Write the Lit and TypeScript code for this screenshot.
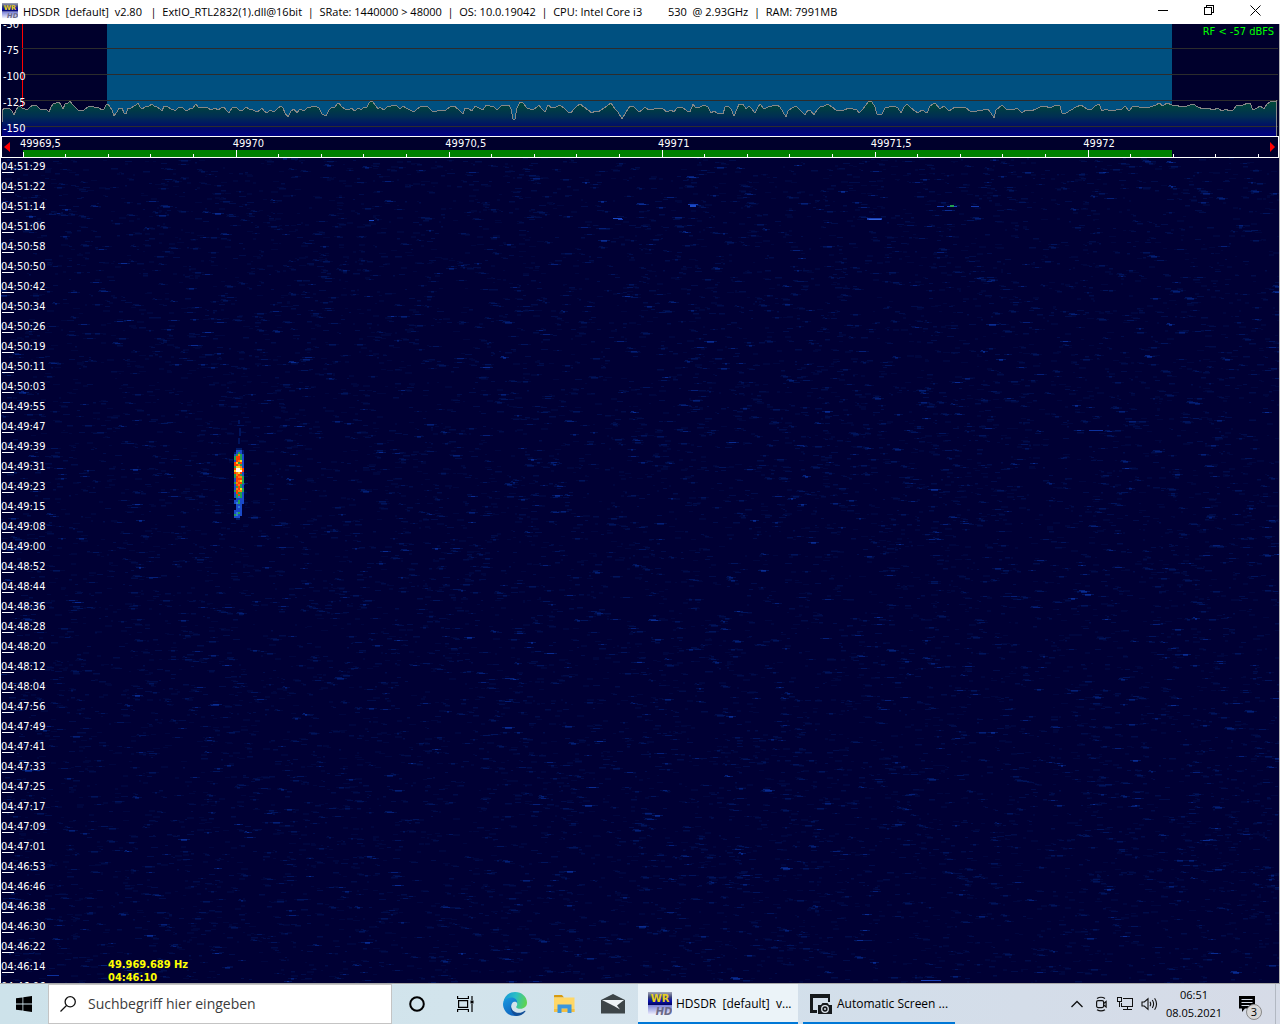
import { LitElement, html, css, svg } from "lit";
import { customElement } from "lit/decorators.js";

/* Spectrum trace: x,y pairs, y measured from the top of the plot. */
const TRACE =
  "1,98 1,86 4,84 8,84 11,87 13,91 15,86 17,83 19,82 21,84 24,85 27,85 29,83 32,81 36,82 38,84 40,86 43,85 46,86 48,88 50,83 52,80 55,79 58,78 60,81 62,85 64,80 67,79 69,77 72,81 74,83 77,86 80,87 83,86 87,83 90,82 93,83 97,83 101,86 103,85 105,81 107,80 109,83 111,86 113,92 116,88 118,84 121,84 123,89 125,90 127,84 130,84 133,82 135,81 137,79 139,83 141,85 144,83 148,82 151,80 153,82 156,83 159,85 161,87 163,82 166,82 170,85 173,86 175,86 178,83 181,83 184,86 187,86 190,84 192,84 195,80 197,83 204,83 207,84 210,86 214,84 217,86 220,84 223,83 225,86 228,89 231,84 235,83 239,87 242,86 245,83 248,85 252,86 256,88 259,86 261,84 263,87 266,89 269,86 273,88 276,85 280,82 282,84 284,89 287,93 290,87 293,85 296,89 299,85 303,87 306,84 310,83 314,82 318,84 321,90 325,92 328,86 331,83 334,83 336,80 338,79 341,83 344,85 347,86 351,84 353,87 358,84 360,86 363,83 366,83 368,79 370,77 372,78 375,82 377,85 379,83 383,86 386,83 390,82 393,81 396,82 399,85 402,82 405,84 409,86 413,88 416,85 419,83 423,82 427,83 431,87 436,87 441,86 445,86 449,83 453,82 457,85 462,90 464,84 468,85 471,87 474,82 478,84 482,86 485,81 489,82 493,83 496,86 500,82 503,81 508,81 510,85 512,95 514,95 516,84 519,78 522,79 526,84 529,85 533,85 536,83 538,81 540,84 544,88 547,81 551,84 555,83 559,81 564,85 567,88 570,89 573,85 576,82 579,80 583,83 587,86 591,89 594,87 597,88 600,86 603,84 606,82 610,79 614,85 617,88 621,95 625,88 629,82 633,83 638,88 641,86 644,83 648,86 653,85 659,84 662,85 666,88 670,86 673,88 676,84 681,83 686,87 689,88 692,80 695,84 699,83 703,81 707,83 710,89 713,87 716,89 722,90 724,83 727,82 730,85 733,92 736,85 738,80 742,80 745,85 748,82 751,85 754,89 756,85 759,80 763,85 767,83 771,82 776,81 779,83 782,88 785,93 787,87 791,84 795,82 799,86 804,91 807,86 810,87 813,91 816,86 819,83 823,82 827,80 831,83 835,86 839,87 843,86 848,84 852,85 856,86 858,89 861,86 865,81 868,77 871,78 874,83 876,90 881,90 884,84 888,83 893,82 897,84 900,89 903,83 906,80 910,84 914,87 917,89 921,86 926,89 929,82 934,79 939,85 943,82 948,87 954,83 964,83 970,88 976,87 982,86 987,85 990,89 993,94 995,86 1001,81 1005,85 1012,86 1016,84 1021,89 1025,86 1030,87 1035,85 1039,83 1044,82 1049,84 1055,81 1059,82 1061,89 1065,89 1070,86 1075,83 1080,81 1086,85 1090,86 1094,82 1098,80 1101,87 1105,85 1109,87 1115,86 1121,85 1124,82 1128,87 1132,82 1138,83 1143,84 1149,83 1155,81 1158,79 1162,82 1166,79 1171,81 1175,81 1180,83 1186,82 1192,80 1197,83 1202,85 1207,84 1212,86 1217,84 1221,87 1225,85 1228,87 1232,86 1236,81 1242,81 1247,79 1249,79 1252,86 1256,84 1259,82 1263,85 1266,80 1269,78 1275,77 1275,95 1276,112";

const LEVELS = ["-50", "-75", "-100", "-125", "-150"];
const FREQS = ["49969,5", "49970", "49970,5", "49971", "49971,5", "49972"];

const TIMES = (
  "04:51:29 04:51:22 04:51:14 04:51:06 04:50:58 04:50:50 04:50:42 04:50:34 04:50:26 04:50:19 04:50:11 04:50:03 " +
  "04:49:55 04:49:47 04:49:39 04:49:31 04:49:23 04:49:15 04:49:08 04:49:00 04:48:52 04:48:44 04:48:36 04:48:28 " +
  "04:48:20 04:48:12 04:48:04 04:47:56 04:47:49 04:47:41 04:47:33 04:47:25 04:47:17 04:47:09 04:47:01 04:46:53 " +
  "04:46:46 04:46:38 04:46:30 04:46:22 04:46:14 04:46:06"
).split(" ");

/* Background noise of the waterfall: short dashes grouped by brightness. */
const NOISE_SHADES = ["#00063e", "#000c4a", "#00145c", "#041f78", "#0a2c92"];
function noisePaths(width: number, height: number): string[] {
  let seed = 20210508;
  const rnd = () => {
    seed = (seed * 1664525 + 1013904223) >>> 0;
    return seed / 4294967296;
  };
  const parts: string[][] = NOISE_SHADES.map(() => []);
  const dash = (level: number, x: number, y: number, w: number) => {
    if (level >= 0) parts[level].push(`M${x} ${y}h${w}v1h-${w}z`);
  };
  for (let i = 0; i < 12500; i++) {
    const r = rnd();
    const level = r < 0.46 ? 0 : r < 0.79 ? 1 : r < 0.94 ? 2 : r < 0.988 ? 3 : 4;
    const x = Math.floor(rnd() * (width / 2)) * 2;
    const y = Math.floor(rnd() * height);
    const w = 2 + Math.floor(rnd() * 6);
    dash(level, x, y, w);
    if (rnd() < 0.45) dash(Math.max(0, level - 1), x, y + 1, w);
    if (rnd() < 0.25) dash(level - 1, x - 2, y - 1, w);
    if (level > 1) dash(level - 2, x - 3, y, w + 6);
  }
  return parts.map((p) => p.join(""));
}
const NOISE = noisePaths(1278, 825);

/* Carrier burst: one row per 2px, five 2px cells per row. */
const HEAT: Record<string, string> = {
  d: "#001a66", b: "#1a49c8", c: "#2f7fd0", g: "#22a050", o: "#ff7a10", r: "#ff3d00", y: "#ffd21a", w: "#fffdf0",
};
const BURST = (
  ".ddd. .bbbd dbgbd bgogb grrgb grrgb broyb rygrb rrogb gyyob rwwyr ywwwr royrb gorgb groog brrrg broyg gorrg " +
  "brogb bgrgb boryg groog brggb bgrgb bgcgb .bbbb bbgbb bcgbb .bbb. .bcb. .bbb. bbbb. bcgb. gcbb. bbb.. .dd.."
).split(" ");

/* Stronger single traces: x, y, width, height, colour. */
const SIGNALS: [number, number, number, number, string][] = [
  [946, 48, 10, 1, "#1a49c8"], [949, 47, 4, 2, "#22a050"], [936, 48, 7, 1, "#123ab0"], [970, 48, 8, 1, "#123ab0"],
  [687, 46, 10, 1, "#123ab0"], [689, 47, 6, 2, "#1a49c8"], [866, 60, 15, 2, "#1a3fb4"], [868, 61, 12, 1, "#3463d8"],
  [612, 60, 9, 1, "#1a49c8"], [617, 61, 5, 1, "#123ab0"], [368, 62, 5, 1, "#1a49c8"], [1088, 272, 14, 1, "#0c309c"],
  [920, 822, 20, 1, "#1a3fb4"], [46, 817, 12, 1, "#0c309c"],
];

const logo = (cls: string) => html`<svg class=${cls} viewBox="0 0 24 24" aria-hidden="true">
  <defs>
    <linearGradient id="lg-top" x1="0" y1="0" x2="0" y2="1">
      <stop offset="0" stop-color="#a4a8b8" /><stop offset=".4" stop-color="#3c4478" /><stop offset=".7" stop-color="#0810b0" /><stop offset="1" stop-color="#02045c" />
    </linearGradient>
    <linearGradient id="lg-bot" x1="0" y1="0" x2="0" y2="1">
      <stop offset="0" stop-color="#7880d8" /><stop offset="1" stop-color="#f4f5ff" />
    </linearGradient>
  </defs>
  <rect y="0" width="24" height="13" fill="url(#lg-top)" />
  <rect y="13" width="24" height="10" fill="url(#lg-bot)" />
  <text x="12" y="10" text-anchor="middle" class="logo-wr">WR</text>
  <text x="16" y="23" text-anchor="middle" class="logo-hd">HD</text>
</svg>`;

@customElement("app-root")
export class AppRoot extends LitElement {
  static styles = css`
    :host {
      display: flex;
      flex-direction: column;
      height: 100vh;
      overflow: hidden;
      background: #fff;
      color: #000;
      font: 12px/16px "Open Sans", "Noto Sans", sans-serif;
    }
    * { box-sizing: border-box; }
    button { border: 0; padding: 0; margin: 0; background: none; font: inherit; color: inherit; }
    svg { display: block; }

    .titlebar { display: flex; align-items: center; height: 24px; flex: none; padding: 0 2px; }
    .title-logo { width: 16px; height: 16px; flex: none; margin-top: -2px; }
    .title { margin: 0 0 0 5px; font: 11px/24px "Open Sans", "Noto Sans", sans-serif; white-space: pre; flex: 1; overflow: hidden; }
    .winbtn { width: 46px; height: 24px; display: grid; place-items: center; padding-bottom: 4px; }
    .winbtn svg { width: 11px; height: 11px; }
    .logo-wr { font: bold 10px "DejaVu Sans", sans-serif; fill: #e8cf20; }
    .logo-hd { font: italic bold 10px "DejaVu Sans", sans-serif; fill: #6a6a86; }

    .receiver {
      flex: 1; min-height: 0; display: flex; flex-direction: column;
      border-left: 1px solid #fff; border-right: 1px solid #b4b4b4;
      background: #00002c; color: #fff;
      font: 11px/13px "DejaVu Sans Condensed", "DejaVu Sans", sans-serif;
    }
    .spectrum { position: relative; height: 112px; flex: none; overflow: hidden; }
    .plot { position: absolute; inset: 0; width: 100%; height: 100%; }
    .levels { position: relative; list-style: none; margin: -12px 0 0; padding: 0 0 0 2px; }
    .levels li { line-height: 26px; }
    .rf { position: absolute; top: 1px; right: 5px; color: #0f0; }

    .scale { position: relative; height: 22px; flex: none; border: 1px solid #fff; }
    .freqs { position: relative; display: grid; grid-template-columns: repeat(6, 1fr); padding-left: 18px; margin-right: -18px; line-height: 13px; }
    .step { position: absolute; top: 4px; width: 9px; height: 12px; }
    .step svg { width: 7px; height: 10px; }
    .prev { left: 2px; }
    .next { right: 0; }

    .waterfall { position: relative; flex: 1; min-height: 0; overflow: hidden; background: #000034; }
    .times { position: relative; list-style: none; margin: 0; padding: 4px 0 0; }
    .times li { height: 20px; line-height: 10px; }
    .times li::after { content: ""; display: block; width: 12px; height: 1px; margin-left: 1px; background: #fff; }
    .cursor { position: absolute; left: 107px; bottom: -1px; margin: 0; color: #ff0; font-weight: bold; }

    .taskbar {
      flex: none; display: flex; height: 41px; border-top: 1px solid #a9a9a9;
      background: linear-gradient(90deg, #cde2ea 0%, #d2e4ec 35%, #d3deea 70%, #d6dbe7 100%);
    }
    .icon-btn { width: 49px; flex: none; display: grid; place-items: center; }
    .start { width: 48px; }
    .search {
      display: flex; align-items: center; gap: 12px; width: 344px; padding-left: 11px;
      background: #fff; border: 1px solid #c4c4c4;
    }
    .search input {
      flex: 1; min-width: 0; border: 0; padding: 0; outline: 0; background: none;
      font: 14px/20px "Open Sans", "Noto Sans", sans-serif; color: #333;
    }
    .search input::placeholder { color: #3c3c3c; opacity: 1; }
    .apps { display: flex; gap: 5px; padding-left: 1px; }
    .task {
      display: flex; align-items: center; gap: 4px; padding: 2px 10px 0;
      border-bottom: 2px solid #0078d7; white-space: pre; text-align: left;
      font: 12px/16px "Open Sans", "Noto Sans", sans-serif;
    }
    .task.active { width: 160px; background: #ebf3f8; }
    .task.other { width: 152px; padding: 2px 6px 0; }
    .task-logo { width: 24px; height: 24px; flex: none; }
    .tray { margin-left: auto; display: flex; align-items: center; }
    .tray-btn { width: 24px; height: 40px; display: grid; place-items: center; }
    .clock { width: 66px; text-align: center; font-size: 11px; line-height: 18px; }
    .clock time { display: block; }
    .notify { position: relative; width: 42px; height: 40px; padding-left: 12px; display: flex; align-items: center; }
    .badge {
      position: absolute; left: 19px; top: 20px; width: 16px; height: 16px; border-radius: 8px;
      border: 1px solid #888; background: #d8d8d8; font-size: 11px; line-height: 14px; text-align: center;
    }
    .desktop { width: 5px; height: 40px; border-left: 1px solid #b2b8c2; margin-left: 6px; }
  `;

  private renderTicks() {
    return Array.from({ length: 30 }, (_, i) => {
      const x = 21 + Math.floor((i * 213) / 5);
      const h = i % 10 === 5 ? 7 : i % 5 === 0 ? 5 : 3;
      return svg`<rect x=${x} y=${20 - h} width="1" height=${h} fill="#fff" />`;
    });
  }

  private renderBurst() {
    return BURST.map((row, r) =>
      [...row].map((c, i) =>
        HEAT[c] ? svg`<rect x=${233 + i * 2} y=${290 + r * 2} width="2" height="2" fill=${HEAT[c]} />` : null
      )
    );
  }

  render() {
    return html`
      <header class="titlebar">
        ${logo("title-logo")}
        <h1 class="title">HDSDR  [default]  v2.80   |  ExtIO_RTL2832(1).dll@16bit  |  SRate: 1440000 &gt; 48000  |  OS: 10.0.19042  |  CPU: Intel Core i3         530  @ 2.93GHz  |  RAM: 7991MB</h1>
        <button class="winbtn" aria-label="Minimize"><svg viewBox="0 0 11 11" shape-rendering="crispEdges"><rect y="5" width="10" height="1" /></svg></button>
        <button class="winbtn" aria-label="Restore"><svg viewBox="0 0 11 11" fill="none" stroke="#000" shape-rendering="crispEdges"><path d="M.5 2.5h7v7h-7zM2.5 2.5v-2h7v7h-2" /></svg></button>
        <button class="winbtn" aria-label="Close"><svg viewBox="0 0 11 11" fill="none" stroke="#000"><path d="M.5.5l10 10M10.5.5l-10 10" /></svg></button>
      </header>

      <main class="receiver">
        <section class="spectrum" aria-label="Spectrum">
          <svg class="plot" viewBox="0 0 1278 112" preserveAspectRatio="none" shape-rendering="crispEdges" aria-hidden="true">
            <defs>
              <linearGradient id="floor" gradientUnits="userSpaceOnUse" x1="0" y1="76" x2="0" y2="112">
                <stop offset="0" stop-color="#004c34" /><stop offset=".45" stop-color="#002f52" /><stop offset=".8" stop-color="#00066c" /><stop offset="1" stop-color="#000084" />
              </linearGradient>
            </defs>
            <rect x="106" width="1065" height="112" fill="#005080" />
            <rect x="21" width="1" height="83" fill="#f00" />
            <polygon points=${`1,112 ${TRACE}`} fill="url(#floor)" />
            <path d="M21 24.5H1277M21 50.5H1277M21 76.5H1277M21 102.5H1277" stroke="#2c2c2c" />
            <polyline points=${TRACE} fill="none" stroke="#878787" />
          </svg>
          <ul class="levels">${LEVELS.map((l) => html`<li>${l}</li>`)}</ul>
          <span class="rf">RF &lt; -57 dBFS</span>
        </section>

        <section class="scale" aria-label="Frequency scale">
          <svg class="plot" viewBox="0 0 1276 20" preserveAspectRatio="none" shape-rendering="crispEdges" aria-hidden="true">
            <rect x="21" y="13" width="1149" height="7" fill="#008000" />
            ${this.renderTicks()}
          </svg>
          <div class="freqs">${FREQS.map((f) => html`<span>${f}</span>`)}</div>
          <button class="step prev" aria-label="Lower frequency"><svg viewBox="0 0 7 10"><path d="M6 0v10L0 5z" fill="#f00" /></svg></button>
          <button class="step next" aria-label="Higher frequency"><svg viewBox="0 0 7 10"><path d="M1 0v10L6 5z" fill="#f00" /></svg></button>
        </section>

        <section class="waterfall" aria-label="Waterfall">
          <svg class="plot" viewBox="0 0 1278 825" preserveAspectRatio="xMinYMin slice" shape-rendering="crispEdges" aria-hidden="true">
            ${NOISE.map((d, i) => svg`<path d=${d} fill=${NOISE_SHADES[i]} />`)}
            <path d="M237 262h2v4h-2zM238 270h2v8h-2zM237 280h2v6h-2z" fill="#00145c" />
            ${SIGNALS.map(([x, y, w, h, c]) => svg`<rect x=${x} y=${y} width=${w} height=${h} fill=${c} />`)}
            ${this.renderBurst()}
          </svg>
          <ol class="times">${TIMES.map((t) => html`<li>${t}</li>`)}</ol>
          <p class="cursor">49.969.689 Hz<br />04:46:10</p>
        </section>
      </main>

      <footer class="taskbar">
        <button class="icon-btn start" aria-label="Start">
          <svg width="16" height="16" viewBox="0 0 16 16"><path d="M0 2.3l6.5-.9v6.1H0zM7.3 1.3L16 0v7.5H7.3zM0 8.4h6.5v6.2L0 13.7zM7.3 8.4H16V16l-8.7-1.3z" /></svg>
        </button>
        <label class="search">
          <svg width="16" height="16" viewBox="0 0 16 16" fill="none" stroke="#111" stroke-width="1.3"><circle cx="10.2" cy="5.8" r="5.1" /><path d="M6.5 9.5L.5 15.5" /></svg>
          <input type="text" aria-label="Suchbegriff hier eingeben" placeholder="Suchbegriff hier eingeben" />
        </label>
        <button class="icon-btn" aria-label="Cortana">
          <svg width="16" height="16" viewBox="0 0 16 16"><circle cx="8" cy="8" r="6.8" fill="none" stroke="#000" stroke-width="2" /></svg>
        </button>
        <button class="icon-btn" aria-label="Task View">
          <svg width="17" height="16" viewBox="0 0 17 16" fill="none" stroke="#000" stroke-width="1.2"><path d="M.6 0v2.5h10.8V0M.6 16v-2.5h10.8V16M1.6 4.6h9v6.8h-9zM15 0v4M15 8v8" /><path d="M13.500 4.500h3v3h-3z" fill="#000" stroke="none" /></svg>
        </button>
        <button class="icon-btn" aria-label="Microsoft Edge">
          <svg width="24" height="24" viewBox="0 0 24 24">
            <defs>
              <linearGradient id="e1" x1="0" y1=".3" x2="1" y2=".5"><stop offset="0" stop-color="#1698d8" /><stop offset=".5" stop-color="#2bbfc4" /><stop offset="1" stop-color="#5fd44f" /></linearGradient>
              <linearGradient id="e2" x1="0" y1="0" x2=".5" y2="1"><stop offset="0" stop-color="#1a9be0" /><stop offset="1" stop-color="#0f66c0" /></linearGradient>
            </defs>
            <path d="M.3 10.5C1.2 4.200 6 0 12 0c7 0 12 4.900 12 10.500 0 3.900-3 6.300-6.500 6.300-2.800 0-4.300-1-4.300-1.900 0-.6 1-1.100 1-2.900 0-2.400-2.400-4.400-5.500-4.400C4.800 7.600 1.500 9 .3 10.500z" fill="url(#e1)" />
            <path d="M0 12c.2-4 4-6.400 8.500-6.400 3.600 0 5.700 2.400 5.700 5.400-1-1.500-3.600-1.600-5.100.2-2.600 3.100-.7 9.300 5.400 11.900.7.300-1.200.9-2.500.9C5.300 24 0 18.700 0 12z" fill="url(#e2)" />
            <path d="M9.500 10.800c-3 3.100-.7 8.200 3 9.500 3.500 1.300 7 .2 9.300-1.500.5-.3.900.1.600.6C20.200 22.400 16.500 24 13.500 24 8.500 22.900 5.500 14.500 9.500 10.800z" fill="#124f98" />
          </svg>
        </button>
        <button class="icon-btn" aria-label="Explorer">
          <svg width="22" height="20" viewBox="0 0 22 20">
            <path d="M1 1.500Q1 1 1.500 1H9l2 2.500H1z" fill="#d69a10" />
            <path d="M1 3.500h20.500V18H1z" fill="#ffd766" /><path d="M1 15h20.500v3H1z" fill="#f5c043" />
            <path d="M4.500 19v-8.500H18.500V19h-4v-4.500h-6V19z" fill="#3a96dd" />
          </svg>
        </button>
        <button class="icon-btn" aria-label="Mail">
          <svg width="24" height="20" viewBox="0 0 24 20"><path d="M0 6L12 0l12 6v13.500H0z" fill="#3d4548" /><path d="M1 6h22l-7 5.500 3 4-6-3.500z" fill="#eef4f7" /></svg>
        </button>
        <div class="apps">
          <button class="task active">${logo("task-logo")}<span>HDSDR  [default]  v...</span></button>
          <button class="task other">
            <svg class="task-logo" viewBox="0 0 24 24">
              <path d="M1 2h20v8h-2V6H4v12h4v3H1z" fill="#15191c" />
              <path d="M9 13h3l1.500-2h5l1.500 2h3v9H9z" fill="#15191c" />
              <circle cx="16" cy="17" r="3.300" fill="none" stroke="#dfe6ee" stroke-width="1.300" /><circle cx="16" cy="17" r="1" fill="#dfe6ee" />
            </svg><span>Automatic Screen ...</span>
          </button>
        </div>
        <div class="tray">
          <button class="tray-btn" aria-label="Hidden icons"><svg width="12" height="8" viewBox="0 0 12 8" fill="none" stroke="#111" stroke-width="1.3"><path d="M.5 7L6 1.500 11.500 7" /></svg></button>
          <button class="tray-btn" aria-label="Meet now"><svg width="12" height="16" viewBox="0 0 12 16" fill="none" stroke="#111" stroke-width="1.2"><rect x="1.6" y="4.600" width="7" height="7" rx="1.500" /><path d="M8.600 7.500l2.500-2v5.500l-2.500-2M2 2.500Q6 0 10 2.500M2 13.700Q6 16.200 10 13.700" /></svg></button>
          <button class="tray-btn" aria-label="Network"><svg width="17" height="16" viewBox="0 0 17 16" fill="none" stroke="#111" shape-rendering="crispEdges"><path d="M5.500 2.500h10v8h-11v-4M10.500 10.500v3M6 13.500h9M.5 1.500h4v4h-4zM2.500 5.500v5" /></svg></button>
          <button class="tray-btn" aria-label="Volume"><svg width="17" height="14" viewBox="0 0 17 14" fill="none" stroke="#111" stroke-width="1.1"><path d="M1 5h2.300L7 1.800v10.500L3.300 9H1zM9 4.700q1.400 2.300 0 4.600M11.300 3q2.600 4 0 8M13.600 1.300q3.900 5.700 0 11.400" /></svg></button>
          <div class="clock"><time>06:51</time><time>08.05.2021</time></div>
          <button class="notify" aria-label="Notifications">
            <svg width="16" height="16" viewBox="0 0 16 16"><path d="M0 0h16v12.500H6L3 16v-3.500H0z" /><path d="M2.500 3.500h11M2.500 6.500h11M2.500 9.500h8" stroke="#d5dbe6" /></svg>
            <span class="badge">3</span>
          </button>
          <div class="desktop"></div>
        </div>
      </footer>
    `;
  }
}
